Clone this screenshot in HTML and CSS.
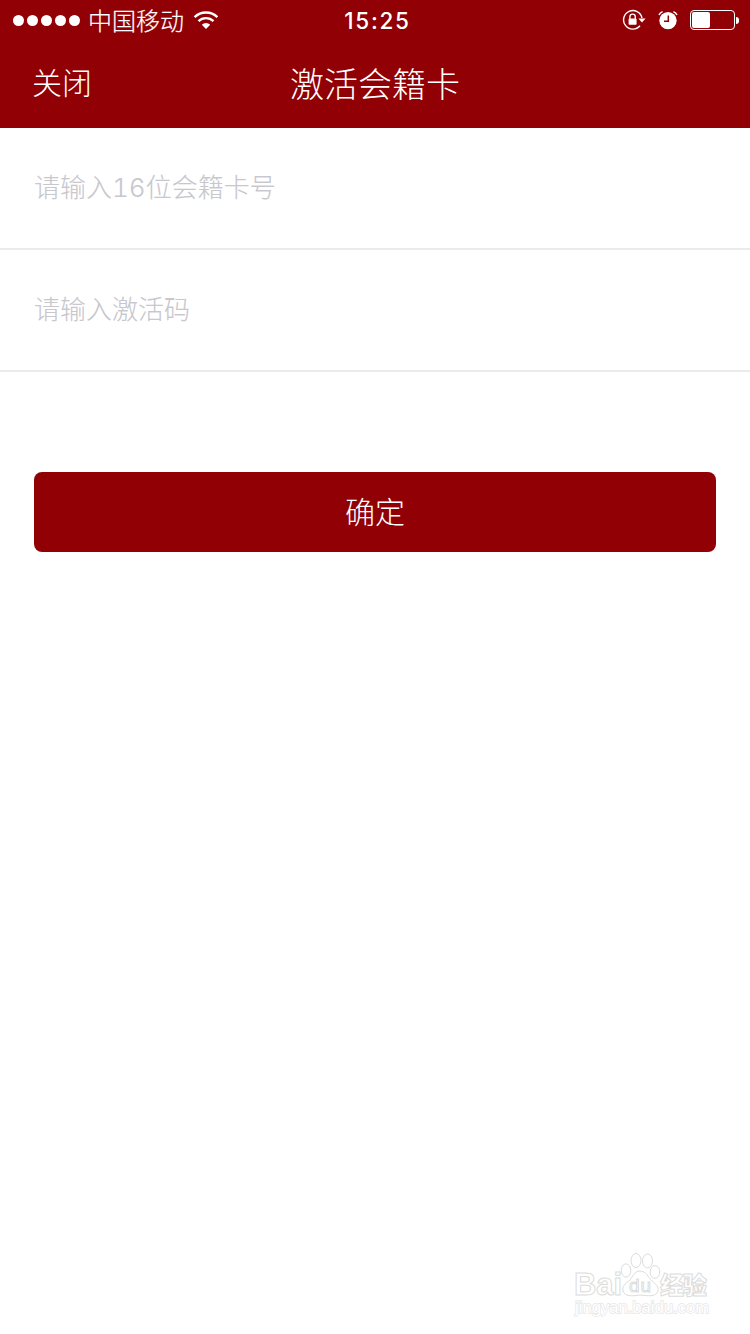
FILE: index.html
```html
<!DOCTYPE html>
<html lang="zh-CN">
<head>
    <meta charset="UTF-8">
    <meta name="viewport" content="width=device-width, initial-scale=1.0">
    <title>激活会籍卡</title>
    <link rel="stylesheet" href="styles.css">
</head>
<body>
    <!-- Header -->
    <header class="header">
        <div class="status-bar">
            <div class="status-left">
                <div class="signal">
                    <i></i><i></i><i></i><i></i><i></i>
                </div>
                <span class="carrier">中国移动</span>
                <svg class="wifi" width="26" height="20" viewBox="0 0 26 20">
                    <path d="M1.6 7.2a16.2 16.2 0 0 1 22.8 0" />
                    <path d="M5.5 11.2a10.6 10.6 0 0 1 15 0" />
                    <path class="solid" d="M13 19l-4.2-4.3a6 6 0 0 1 8.4 0z" />
                </svg>
            </div>
            <span class="time">15:25</span>
            <div class="status-right">
                <svg class="lock" width="24" height="22" viewBox="0 0 24 22">
                    <path d="M18 16.8A9.3 9.3 0 1 1 20 9" />
                    <path class="shackle" d="M7.9 10V7.8a2.7 2.7 0 0 1 5.4 0V10" />
                    <rect class="solid" x="6.6" y="9.6" width="8" height="6.2" rx="0.8" />
                    <path class="solid" d="M16.4 9.4h7.2L20 13.4z" />
                </svg>
                <svg class="alarm" width="20" height="20" viewBox="0 0 20 20">
                    <circle class="solid" cx="10" cy="10.6" r="8.7" />
                    <path class="bell" d="M1 5A6 6 0 0 1 4.6 1.6M19 5A6 6 0 0 0 15.4 1.6" />
                    <path class="hands" d="M10.3 5.4v5.8H6" />
                </svg>
                <div class="battery">
                    <div class="battery-body"><div class="battery-level" style="width: 43%"></div></div>
                    <div class="battery-cap"></div>
                </div>
            </div>
        </div>
        <nav class="navbar">
            <a href="#" class="close-link">关闭</a>
            <h1>激活会籍卡</h1>
        </nav>
    </header>

    <!-- Activation Form -->
    <form class="card-form">
        <div class="field">
            <input type="text" maxlength="16" placeholder="请输入16位会籍卡号">
        </div>
        <div class="field">
            <input type="text" placeholder="请输入激活码">
        </div>
        <button type="button" class="submit-btn">确定</button>
    </form>

    <!-- Watermark -->
    <footer class="watermark">
        <svg width="144" height="68" viewBox="0 0 144 68">
            <text class="brand" x="2" y="45" textLength="48">Bai</text>
            <g class="paw">
                <ellipse cx="54" cy="20.5" rx="4.8" ry="6.6" />
                <ellipse cx="64" cy="10.5" rx="5" ry="7" />
                <ellipse cx="75.5" cy="11" rx="5" ry="7" />
                <ellipse cx="83" cy="22" rx="4.8" ry="6.4" />
                <path d="M68 21c6 0 8 6 12 10 4 3 7 6 6 10-2 6-9 5-18 4-8 1-15 2-17-4-1-5 2-7 6-10 4-4 5-10 11-10z" />
            </g>
            <text class="brand du" x="57" y="42" textLength="22">du</text>
            <text class="brand cjk" x="88" y="44" textLength="47">经验</text>
            <text class="site" x="3" y="62.5" textLength="134" lengthAdjust="spacingAndGlyphs">jingyan.baidu.com</text>
        </svg>
    </footer>
</body>
</html>
```
FILE: styles.css
```css
:root {
    --primary-color: #900004;
    --placeholder-color: #c7c7cd;
    --line-color: #ebebeb;
}

* {
    box-sizing: border-box;
}

body {
    display: flex;
    flex-direction: column;
    min-height: 1334px;
    margin: 0;
    font-family: 'Inter', 'Noto Sans CJK SC', sans-serif;
    font-weight: 300;
    background-color: #fff;
}

/* Header */
.header {
    height: 128px;
    background-color: var(--primary-color);
    color: #fff;
}

.status-bar {
    display: grid;
    grid-template-columns: 1fr auto 1fr;
    align-items: center;
    height: 40px;
    padding: 0 11px 0 13px;
}

.status-left,
.status-right {
    display: flex;
    align-items: center;
}

.status-right {
    justify-content: flex-end;
}

.signal {
    display: flex;
    gap: 3px;
    margin-right: 8px;
}

.signal i {
    width: 11px;
    height: 11px;
    border-radius: 50%;
    background-color: #fff;
}

.carrier {
    padding-top: 4px;
    font-size: 24px;
    line-height: 36px;
    -webkit-text-stroke: 0.2px;
}

.time {
    padding: 1px 0 0 3px;
    font-size: 22.5px;
    font-weight: 550;
    letter-spacing: 1.7px;
}

.status-bar svg {
    fill: none;
    stroke: #fff;
    stroke-width: 2.4;
}

.status-bar svg .solid {
    fill: #fff;
    stroke: none;
}

.wifi {
    margin-left: 9px;
}

.status-bar .lock {
    stroke-width: 1.4;
    margin-right: 12px;
}

.status-bar .alarm {
    stroke-width: 1.5;
    margin-right: 12px;
}

.alarm .hands {
    stroke: var(--primary-color);
}

.battery {
    display: flex;
    align-items: center;
    gap: 1px;
}

.battery-body {
    width: 45px;
    height: 20px;
    padding: 1px;
    border: 1px solid #fff;
    border-radius: 4px;
}

.battery-level {
    height: 100%;
    border-radius: 2px;
    background-color: #fff;
}

.battery-cap {
    width: 3px;
    height: 7px;
    border-radius: 0 3px 3px 0;
    background-color: #fff;
}

.navbar {
    display: grid;
    grid-template-columns: 1fr auto 1fr;
    align-items: center;
    height: 88px;
    padding: 0 32px 4px;
}

.close-link {
    padding-bottom: 2px;
    color: #fff;
    font-size: 30px;
    text-decoration: none;
}

.navbar h1 {
    margin: 0;
    font-size: 34px;
    font-weight: 300;
}

/* Form */
.card-form {
    flex: 1;
}

.field {
    height: 122px;
    border-bottom: 2px solid var(--line-color);
}

.field input {
    display: block;
    width: 100%;
    height: 120px;
    padding: 0 34px 1px;
    border: none;
    outline: none;
    background: none;
    font-family: inherit;
    font-size: 26px;
    font-weight: 300;
    font-variant-numeric: tabular-nums;
}

.field input::placeholder {
    color: var(--placeholder-color);
    -webkit-text-stroke: 0.1px;
}

.submit-btn {
    display: block;
    width: 682px;
    height: 80px;
    margin: 100px auto 0;
    padding: 0 0 5px;
    border: none;
    border-radius: 8px;
    background-color: var(--primary-color);
    color: #fff;
    font-family: inherit;
    font-size: 30px;
    font-weight: 300;
}

/* Watermark */
.watermark {
    display: flex;
    justify-content: flex-end;
    padding: 0 34px 16px 0;
}

.watermark svg {
    fill: #fff;
    stroke: #dcdcdc;
    stroke-width: 1;
}

.brand {
    font-family: 'Liberation Sans', sans-serif;
    font-size: 31px;
    font-weight: bold;
}

.du {
    font-size: 19px;
    font-weight: normal;
}

.cjk {
    font-family: 'Noto Sans CJK SC', sans-serif;
    font-size: 24px;
    font-weight: 900;
}

.site {
    font-family: 'Liberation Sans', sans-serif;
    font-size: 16px;
    stroke: #e6e6e6;
    stroke-width: 1.4;
    paint-order: stroke;
}
```
